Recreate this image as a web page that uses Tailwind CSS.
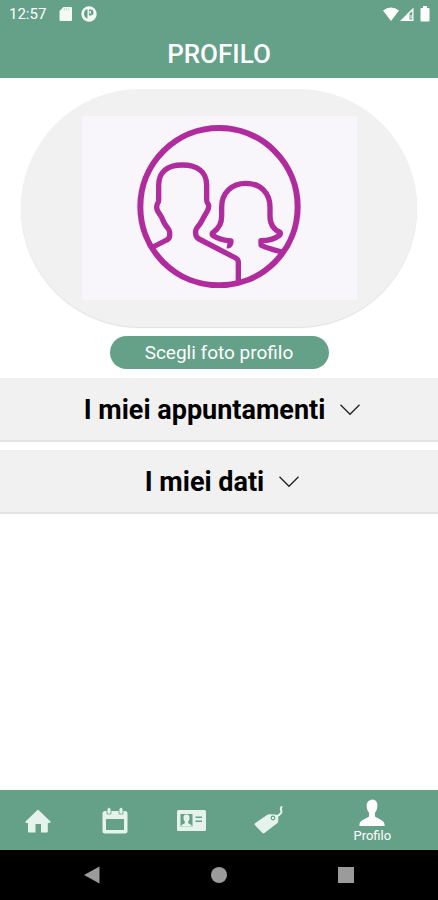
<!DOCTYPE html>
<html lang="it">
<head>
<meta charset="utf-8">
<meta name="viewport" content="width=device-width, initial-scale=1">
<title>Profilo</title>
<script src="https://cdn.jsdelivr.net/npm/@tailwindcss/browser@4"></script>
</head>
<body class="flex min-h-screen flex-col bg-white font-[Roboto,sans-serif] text-black">
  <header class="bg-[#65a089] text-white">
    <div class="flex h-7 items-center justify-between pr-2 pl-[9px]">
      <div class="flex items-center">
        <time class="text-[15px] leading-7">12:57</time>
        <svg class="ml-[13px] h-4 w-[14px]" viewBox="0 0 14 16" aria-hidden="true"><path fill="#f3faf6" d="M4.500 1h7.500a1 1 0 0 1 1 1v12a1 1 0 0 1-1 1h-10.500a1 1 0 0 1-1-1v-9z"/><path stroke="#c9dfd5" d="M5.500 2v2.500M7.500 2v2.500M9.500 2v2.500"/></svg>
        <svg class="ml-2 size-4" viewBox="0 0 16 16" aria-hidden="true"><circle cx="8" cy="8" r="7.700" fill="#f3faf6"/><path fill="#65a089" d="M6.500 3v9.500a5 5 0 0 1 0-9.500zM8 3.500h1.500a3 3 0 0 1 0 6h-1.500z"/><path fill="#f3faf6" d="M8.500 5h1.500v2.500h-1.500z"/></svg>
      </div>
      <div class="flex items-center">
        <svg class="h-4 w-[18px]" viewBox="0 0 18 16" aria-hidden="true"><path fill="#fff" d="M1 4.500Q9-1.500 17 4.500L9 15z"/></svg>
        <svg class="h-4 w-[14px]" viewBox="0 0 14 16" aria-hidden="true"><path fill="#fff" fill-rule="evenodd" d="M0 15 13.500 1.500V15zM9.500 7.500v6h2.700v-8.500z"/><path fill="#fff" d="M10.500 9h1v3.500h-1z"/></svg>
        <svg class="ml-[6px] h-4 w-[10px]" viewBox="0 0 10 16" aria-hidden="true"><path fill="#fff" d="M3 0h4v2h1.500a1 1 0 0 1 1 1v11.500a1 1 0 0 1-1 1h-7a1 1 0 0 1-1-1V3a1 1 0 0 1 1-1H3z"/></svg>
      </div>
    </div>
    <h1 class="h-[50px] text-center text-[26px] leading-[52px] font-medium">PROFILO</h1>
  </header>

  <main class="flex flex-1 flex-col items-center pt-[11px]">
    <section class="w-full px-[21px]">
      <div class="flex justify-center rounded-[119px] bg-[#f1f1f1] pt-[27px] pb-[27px] shadow-[0_1px_1px_#00000020]">
        <div class="flex h-[184px] w-[275px] justify-center bg-[#f8f5fb] pt-2">
          <svg class="size-[164px]" viewBox="22 26 492 492" fill="none" stroke="#b02c9e" stroke-width="16" stroke-linejoin="round" role="img" aria-label="Foto profilo">
            <circle cx="268" cy="274" r="236" stroke-width="18"/>
            <path d="M70 395 111 374Q120 370 120 360V351Q120 345 114 338Q104 327 96 306L84 287Q78 275 84 264Q87 262 87 255V210C87 169 113 149 158 149S231 169 231 210V255Q231 262 236 267Q239 276 233 287L222 306Q213 325 201 339Q197 344 198 354Q198 366 208 371L318 428Q326 432 326 441V500"/>
            <path d="M292 391Q304 393 304 377Q268 373 249 360Q245 354 252 350Q276 333 276 303V276C276 232 306 204 349 204S421 232 421 276V303C421 329 435 345 450 350Q455 355 449 360Q429 376 394 376V389Q401 395 456 410"/>
          </svg>
        </div>
      </div>
    </section>

    <button type="button" class="mt-[9px] h-[33px] w-1/2 rounded-full bg-[#65a089] pt-px text-[19px] leading-8 text-white">Scegli foto profilo</button>

    <div class="mt-[9px] flex w-full flex-col gap-2">
      <button type="button" aria-expanded="false" class="flex h-16 w-full items-center justify-center gap-[15px] border-b-2 border-[#e2e2e2] bg-[#f1f1f1] pt-[3px] pl-[6px] text-[27px] font-bold">
        I miei appuntamenti
        <svg class="mb-[2px] h-3 w-5" viewBox="0 0 20 12" fill="none" stroke="#222" stroke-width="1.300" aria-hidden="true"><path d="m.5.800 9.500 9.500 9.500-9.500"/></svg>
      </button>
      <button type="button" aria-expanded="false" class="flex h-16 w-full items-center justify-center gap-[15px] border-b-2 border-[#e2e2e2] bg-[#f1f1f1] pt-[3px] pl-[6px] text-[27px] font-bold">
        I miei dati
        <svg class="mb-[2px] h-3 w-5" viewBox="0 0 20 12" fill="none" stroke="#222" stroke-width="1.300" aria-hidden="true"><path d="m.5.800 9.500 9.500 9.500-9.500"/></svg>
      </button>
    </div>
  </main>

  <nav aria-label="Principale" class="grid h-[60px] grid-cols-[7fr_7fr_7fr_7fr_12fr] bg-[#65a089] text-[#e6f3ec]">
    <a href="#home" aria-label="Home" class="flex items-center justify-center">
      <svg class="mt-[2px] h-6 w-[26px]" viewBox="0 0 26 24" fill="currentColor"><path d="M13 .500 25.500 12.500Q26 14 24 14H22.800V22.500Q22.800 23.500 21.800 23.500H16V15H10.500V23.500H4Q3 23.500 3 22.500V14H1.500Q0 14 .500 12.500z"/></svg>
    </a>
    <a href="#calendario" aria-label="Calendario" class="flex items-center justify-center">
      <svg class="h-[27px] w-[26px]" viewBox="0 0 26 27" fill="currentColor"><path fill-rule="evenodd" d="M3 4H23Q25.500 4 25.500 6.500V24Q25.500 26.500 23 26.500H3Q.500 26.500 .500 24V6.500Q.500 4 3 4zM4 12V23H22V12z"/><path d="M5 2.500a2 2 0 0 1 4 0V7H5zM17 2.500a2 2 0 0 1 4 0V7h-4z" stroke="#65a089" stroke-width=".8"/></svg>
    </a>
    <a href="#scheda" aria-label="Scheda" class="flex items-center justify-center">
      <svg class="h-[21px] w-[29px]" viewBox="0 0 29 21" fill="currentColor"><rect width="29" height="21" rx="1.500"/><path fill="#65a089" d="M3.500 4H15.500V16.500H3.500zM18.500 6.500h6.500v1.500h-6.500zM18.500 10.500h6.500V12h-6.500z"/><path d="M9.500 4.500c2.500 0 3.200 1.500 3 4-.1 1.500-.8 2.500-1.300 3.200v1.600l3.300 1.700v1.500h-10V15l3.300-1.700v-1.600C7.300 11 6.600 10 6.500 8.500c-.2-2.500.5-4 3-4z"/></svg>
    </a>
    <a href="#offerte" aria-label="Offerte" class="flex items-center justify-center">
      <svg class="h-7 w-[29px]" viewBox="0 0 29 28" fill="currentColor"><path d="M1.300 17 13 9Q14.500 8 16 8.200L21.500 8.500Q24 9 24.300 11V14.500Q24.300 16 23.500 17L10.500 27Q9 28 8 26.500L.800 19Q.300 17.800 1.300 17z"/><circle cx="19" cy="12" r="1.800" stroke="#65a089" stroke-width="1.200"/><path d="M22 10.500Q25.500 9.500 27 7Q28 5.500 27 4Q26.500 2.500 27.500 1" fill="none" stroke="currentColor" stroke-width="2" stroke-linecap="round"/></svg>
    </a>
    <a href="#profilo" aria-current="page" class="flex flex-col items-center pt-2 text-white">
      <svg class="h-[29px] w-[26px]" viewBox="0 0 26 30" fill="currentColor" aria-hidden="true"><path d="M13.500 1.500c3.500.3 5.500 2.500 5 7.500-.2 3-1.500 5-2.500 6.500v3.500c1.500 2.300 9.700 3.500 10 8.500v1.500H0v-1.500c.3-5 8.500-6.200 10-8.500v-3.500C9 14 7.700 12 7.500 9 7.200 5 8.500 3 11 2.200z"/></svg>
      <span class="text-[13px] leading-[18px]">Profilo</span>
    </a>
  </nav>

  <div class="grid h-[50px] grid-cols-3 items-center bg-black px-[29px]">
    <button type="button" aria-label="Indietro" class="flex justify-center"><svg class="size-[18px]" viewBox="0 0 18 18"><path fill="#9b9b9b" d="M1 9 16.500.500v17z"/></svg></button>
    <button type="button" aria-label="Schermata Home" class="flex justify-center"><svg class="size-[18px]" viewBox="0 0 18 18"><circle cx="9" cy="9" r="8" fill="#9b9b9b"/></svg></button>
    <button type="button" aria-label="App recenti" class="flex justify-center"><svg class="size-[18px]" viewBox="0 0 18 18"><path fill="#9b9b9b" d="M1 1h16v16H1z"/></svg></button>
  </div>
</body>
</html>
